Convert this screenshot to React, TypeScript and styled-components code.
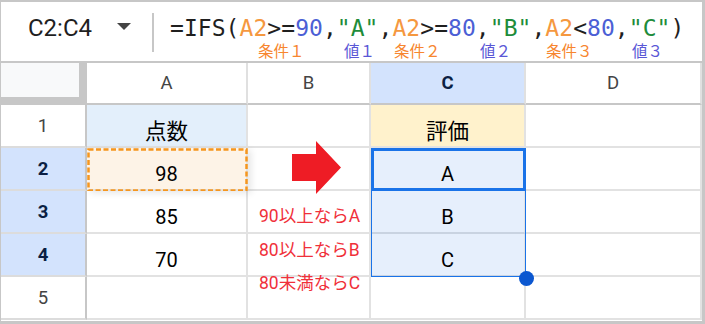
import React from 'react'
import styled, { createGlobalStyle } from 'styled-components'

const GlobalStyle = createGlobalStyle`
  body {
    margin: 0;
    background: #fff;
  }
`

const SEL_BG = '#e6effc'
const BLUE = '#1a73e8'

const Page = styled.div`
  width: 705px;
  height: 324px;
  box-sizing: border-box;
  border-style: solid;
  border-color: #c7c7c7;
  border-width: 2px 3px 3px 1px;
  overflow: hidden;
  background: #fff;
  font-family: Roboto, 'Noto Sans CJK JP', sans-serif;
`

const FormulaBar = styled.div`
  height: 59px;
  border-bottom: 2px solid #c7c7c7;
  display: flex;
  align-items: flex-start;
`

const NameBox = styled.div`
  margin: 11px 0 0 27px;
  font-size: 24px;
  line-height: 30px;
  color: #1f1f1f;
`

const Caret = styled.svg`
  margin: 21px 0 0 25px;
  flex: none;
`

const Divider = styled.div`
  margin: 11px 0 0 21px;
  width: 2px;
  height: 39px;
  background: #c7c7c7;
`

const FormulaArea = styled.div`
  margin-left: 16px;
  display: flex;
  flex-direction: column;
`

const FormulaText = styled.div`
  margin-top: 13px;
  font-family: 'DejaVu Sans Mono', 'Liberation Mono', monospace;
  font-size: 23px;
  line-height: 26px;
  letter-spacing: 0.05px;
  color: #1f1f1f;
  white-space: pre;
`

const Tok = styled.span<{ $kind?: 'ref' | 'num' | 'str' }>`
  color: ${p =>
    p.$kind === 'ref'
      ? '#f5983f'
      : p.$kind === 'num'
        ? '#4c5fd5'
        : p.$kind === 'str'
          ? '#1e8c3a'
          : '#1f1f1f'};
`

const LabelRow = styled.div`
  display: flex;
  font-family: 'Noto Sans CJK JP', sans-serif;
  font-size: 15.5px;
  line-height: 18px;
  white-space: nowrap;
`

const Label = styled.span<{ $cond?: boolean; $gap: number }>`
  margin-left: ${p => p.$gap}px;
  width: ${p => (p.$cond ? 47 : 30)}px;
  color: ${p => (p.$cond ? '#f7862f' : '#5a57d6')};
`

const Grid = styled.div`
  display: grid;
  grid-template-columns: 86px 161px 123px 155px 176px;
  grid-template-rows: 42px repeat(5, 43px);
`

const Corner = styled.div`
  grid-row: 1;
  grid-column: 1;
  background: #f8f9fa;
  border-right: 8px solid #c7c7c7;
  border-bottom: 8px solid #c7c7c7;
`

const ColHeader = styled.div<{ $col: number; $active?: boolean }>`
  grid-row: 1;
  grid-column: ${p => p.$col};
  display: flex;
  align-items: center;
  justify-content: center;
  border-right: 2px solid #e0e0e0;
  border-bottom: 2px solid #c7c7c7;
  background: ${p => (p.$active ? '#d3e3fd' : '#fff')};
  color: ${p => (p.$active ? '#0b1f44' : '#444')};
  font-weight: ${p => (p.$active ? 700 : 400)};
  font-size: 18.5px;
`

const RowHeader = styled.div<{ $row: number; $active?: boolean }>`
  grid-row: ${p => p.$row};
  grid-column: 1;
  display: flex;
  align-items: center;
  justify-content: center;
  border-right: 2px solid #c7c7c7;
  border-bottom: 2px solid #dcdcdc;
  background: ${p => (p.$active ? '#d3e3fd' : '#fff')};
  color: ${p => (p.$active ? '#0b1f44' : '#444')};
  font-weight: ${p => (p.$active ? 700 : 400)};
  font-size: 18.5px;
`

const Cell = styled.div<{ $row: number; $col: number; $bg?: string; $sel?: boolean }>`
  grid-row: ${p => p.$row};
  grid-column: ${p => p.$col};
  display: flex;
  align-items: center;
  justify-content: center;
  padding-top: 10px;
  box-sizing: border-box;
  border-right: 2px solid #e2e2e2;
  border-bottom: 2px solid ${p => (p.$sel ? '#c9d3e1' : '#e2e2e2')};
  background: ${p => p.$bg || '#fff'};
  font-size: 20px;
  color: #000;
`

const Heading = styled.span`
  font-family: 'Noto Sans CJK JP', sans-serif;
  font-size: 21.5px;
  margin-top: -2px;
`

const CopyMarquee = styled.div`
  grid-row: 3;
  grid-column: 2;
  z-index: 1;
  pointer-events: none;
  box-shadow: 3px 2px 7px rgba(0, 0, 0, 0.1);
  svg {
    display: block;
  }
`

const RangeFrame = styled.div`
  grid-row: 3 / 6;
  grid-column: 4;
  z-index: 2;
  box-sizing: border-box;
  border: 1px solid ${BLUE};
  pointer-events: none;
`

const ActiveFrame = styled.div`
  grid-row: 3;
  grid-column: 4;
  z-index: 3;
  box-sizing: border-box;
  border: 3px solid ${BLUE};
  pointer-events: none;
`

const FillHandle = styled.div`
  grid-row: 5;
  grid-column: 4;
  z-index: 4;
  align-self: end;
  justify-self: end;
  width: 15px;
  height: 15px;
  margin: 0 -8px -9px 0;
  border-radius: 50%;
  background: #0b57d0;
`

const Arrow = styled.svg`
  grid-row: 3;
  grid-column: 3;
  z-index: 1;
  place-self: center;
  transform: translate(7px, -2px);
`

const Notes = styled.div`
  grid-row: 4 / 7;
  grid-column: 3 / 5;
  z-index: 1;
  align-self: start;
  padding: 9px 0 0 11px;
  font-size: 17.5px;
  line-height: 33.5px;
  color: #f0303a;
  white-space: nowrap;
  pointer-events: none;
`

type CellData = { text?: string; bg?: string; heading?: boolean; sel?: boolean }

const rows: { n: string; active: boolean; cells: CellData[] }[] = [
  {
    n: '1',
    active: false,
    cells: [
      { text: '点数', bg: '#e3effb', heading: true },
      {},
      { text: '評価', bg: '#fff2cc', heading: true },
      {},
    ],
  },
  { n: '2', active: true, cells: [{ text: '98', bg: '#fdf3e7' }, {}, { text: 'A', bg: SEL_BG, sel: true }, {}] },
  { n: '3', active: true, cells: [{ text: '85' }, {}, { text: 'B', bg: SEL_BG, sel: true }, {}] },
  { n: '4', active: true, cells: [{ text: '70' }, {}, { text: 'C', bg: SEL_BG, sel: true }, {}] },
  { n: '5', active: false, cells: [{}, {}, {}, {}] },
]

const labels = [
  { text: '条件１', cond: true, gap: 88 },
  { text: '値１', gap: 39 },
  { text: '条件２', cond: true, gap: 20 },
  { text: '値２', gap: 39 },
  { text: '条件３', cond: true, gap: 36 },
  { text: '値３', gap: 39 },
]

export default function App() {
  return (
    <Page>
      <GlobalStyle />
      <FormulaBar>
        <NameBox>C2:C4</NameBox>
        <Caret width="14" height="7" viewBox="0 0 14 7">
          <polygon points="0,0 14,0 7,7" fill="#444" />
        </Caret>
        <Divider />
        <FormulaArea>
          <FormulaText>
            =IFS(<Tok $kind="ref">A2</Tok>&gt;=<Tok $kind="num">90</Tok>,
            <Tok $kind="str">"A"</Tok>,<Tok $kind="ref">A2</Tok>&gt;=
            <Tok $kind="num">80</Tok>,<Tok $kind="str">"B"</Tok>,
            <Tok $kind="ref">A2</Tok>&lt;<Tok $kind="num">80</Tok>,
            <Tok $kind="str">"C"</Tok>)
          </FormulaText>
          <LabelRow>
            {labels.map(l => (
              <Label key={l.text} $cond={l.cond} $gap={l.gap}>
                {l.text}
              </Label>
            ))}
          </LabelRow>
        </FormulaArea>
      </FormulaBar>

      <Grid>
        <Corner />
        {['A', 'B', 'C', 'D'].map((c, i) => (
          <ColHeader key={c} $col={i + 2} $active={c === 'C'}>
            {c}
          </ColHeader>
        ))}
        {rows.map((r, ri) => (
          <React.Fragment key={r.n}>
            <RowHeader $row={ri + 2} $active={r.active}>
              {r.n}
            </RowHeader>
            {r.cells.map((c, ci) => (
              <Cell key={ci} $row={ri + 2} $col={ci + 2} $bg={c.bg} $sel={c.sel}>
                {c.heading ? <Heading>{c.text}</Heading> : c.text}
              </Cell>
            ))}
          </React.Fragment>
        ))}

        <CopyMarquee>
          <svg width="161" height="43">
            <rect
              x="1.5"
              y="1.5"
              width="158"
              height="41"
              fill="none"
              stroke="#f5961f"
              strokeWidth="2.5"
              strokeDasharray="5 2.5"
            />
          </svg>
        </CopyMarquee>
        <Arrow width="49" height="53" viewBox="0 0 49 53">
          <polygon points="0,13 24,13 24,0 49,26.5 24,53 24,40 0,40" fill="#ee1c25" />
        </Arrow>
        <Notes>
          <div>90以上ならA</div>
          <div>80以上ならB</div>
          <div>80未満ならC</div>
        </Notes>
        <RangeFrame />
        <ActiveFrame />
        <FillHandle />
      </Grid>
    </Page>
  )
}
